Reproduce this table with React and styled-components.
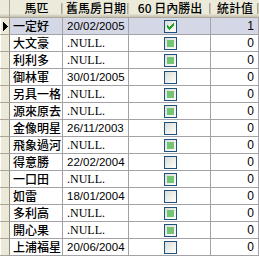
import React from "react";
import styled, { createGlobalStyle, css } from "styled-components";

const GlobalStyle = createGlobalStyle`
  html, body { margin: 0; padding: 0; background: #fcfcf9; }
  body { font-family: "Liberation Sans", "Noto Sans CJK TC", sans-serif; }
`;

const rows = [
  { name: "一定好", date: "20/02/2005", win: "check", count: 1 },
  { name: "大文豪", date: null, win: "fill", count: 0 },
  { name: "利利多", date: null, win: "fill", count: 0 },
  { name: "御林軍", date: "30/01/2005", win: "empty", count: 0 },
  { name: "另具一格", date: null, win: "fill", count: 0 },
  { name: "源來原去", date: null, win: "fill", count: 0 },
  { name: "金像明星", date: "26/11/2003", win: "empty", count: 0 },
  { name: "飛象過河", date: null, win: "fill", count: 0 },
  { name: "得意勝", date: "22/02/2004", win: "empty", count: 0 },
  { name: "一口田", date: null, win: "fill", count: 0 },
  { name: "如雷", date: "18/01/2004", win: "empty", count: 0 },
  { name: "多利高", date: null, win: "fill", count: 0 },
  { name: "開心果", date: null, win: "fill", count: 0 },
  { name: "上浦福星", date: "20/06/2004", win: "empty", count: 0 },
];

const Sheet = styled.div`
  display: grid;
  grid-template-columns: 10px 53px 66px 82px 48px;
  grid-template-rows: 18px;
  grid-auto-rows: 17px;
  width: 259px;
  background: #ffffff;
`;

const headBase = css`
  box-sizing: border-box;
  background: #ebeadb;
  border-bottom: 1px solid #aca899;
  box-shadow: inset 0 -1px 0 #cbc7b8, inset 0 -2px 0 #d6d2c2, inset 0 -3px 0 #e2decd;
  position: relative;
`;

const Corner = styled.div`
  ${headBase};
  border-right: 1px solid #aca899;
`;

const HeadCell = styled.div`
  ${headBase};
  display: flex;
  align-items: center;
  justify-content: center;
  padding-bottom: 1px;
  font-family: "Noto Sans CJK TC", "Liberation Sans", sans-serif;
  font-size: 12px;
  font-weight: 500;
  line-height: 14px;
  color: #000;
  white-space: nowrap;
  overflow: hidden;
  &::after {
    content: "";
    position: absolute;
    right: 0;
    top: 3px;
    height: 11px;
    width: 1px;
    background: #c7c5b2;
    box-shadow: -1px 0 0 #aca899;
  }
`;

const RowHead = styled.div`
  box-sizing: border-box;
  background: #ece9d8;
  border-right: 1px solid #8d8b7f;
  border-bottom: 1px solid #aca899;
  box-shadow: inset 1px 0 0 #ffffff;
  display: flex;
  align-items: center;
`;

const Pointer = styled.svg`
  display: block;
  margin-left: 3px;
`;

const Cell = styled.div`
  box-sizing: border-box;
  border-right: 1px solid #a3a2a6;
  border-bottom: 1px solid #a3a2a6;
  background: ${(p) => (p.$selected ? "#d4d8e6" : "#ffffff")};
  display: flex;
  align-items: center;
  justify-content: ${(p) =>
    p.$align === "right" ? "flex-end" : p.$align === "center" ? "center" : "flex-start"};
  padding: ${(p) => (p.$align === "right" ? "0 4px 0 0" : p.$align === "center" ? "0" : "0 0 0 3px")};
  color: #000;
  white-space: nowrap;
  overflow: hidden;
`;

const NameText = styled.span`
  font-family: "Noto Sans CJK TC", sans-serif;
  font-size: 12px;
  font-weight: 500;
  line-height: 14px;
`;

const DateText = styled.span`
  font-family: "Liberation Sans", sans-serif;
  font-size: 11.5px;
  line-height: 14px;
  padding-left: 1px;
`;

const NullText = styled.span`
  font-family: "Liberation Serif", serif;
  font-size: 12px;
  line-height: 14px;
  padding-left: 1px;
`;

const NumText = styled.span`
  font-family: "Liberation Sans", sans-serif;
  font-size: 12px;
  line-height: 14px;
`;

const Box = styled.div`
  box-sizing: border-box;
  width: 13px;
  height: 13px;
  border: 1px solid #1c5180;
  background: linear-gradient(135deg, #dcdcd7 0%, #f4f4f0 70%, #ffffff 100%);
  display: flex;
  align-items: center;
  justify-content: center;
  margin-left: 1px;
`;

const Fill = styled.div`
  width: 7px;
  height: 7px;
  background: #73c474;
`;

function CheckBox({ state }) {
  return (
    <Box>
      {state === "fill" && <Fill />}
      {state === "check" && (
        <svg width="11" height="11" viewBox="0 0 11 11" shapeRendering="crispEdges">
          <path
            d="M8 2h1v1H8zM7 3h2v1H7zM2 4h1v1H2zM6 4h3v1H6zM2 5h2v1H2zM5 5h3v1H5zM2 6h5v1H2zM3 7h3v1H3zM4 8h1v1H4z"
            fill="#21a121"
          />
        </svg>
      )}
    </Box>
  );
}

export default function App() {
  return (
    <>
      <GlobalStyle />
      <Sheet>
        <Corner />
        <HeadCell>馬匹</HeadCell>
        <HeadCell>舊馬房日期</HeadCell>
        <HeadCell>60 日內勝出</HeadCell>
        <HeadCell>統計值</HeadCell>
        {rows.map((r, i) => {
          const sel = i === 0;
          return (
            <React.Fragment key={r.name}>
              <RowHead>
                {sel && (
                  <Pointer width="5" height="9" viewBox="0 0 5 9" shapeRendering="crispEdges">
                    <path d="M0 0h1v9H0zM1 1h1v7H1zM2 2h1v5H2zM3 3h1v3H3zM4 4h1v1H4z" fill="#000" />
                  </Pointer>
                )}
              </RowHead>
              <Cell $selected={sel}>
                <NameText>{r.name}</NameText>
              </Cell>
              <Cell $selected={sel}>
                {r.date ? <DateText>{r.date}</DateText> : <NullText>.NULL.</NullText>}
              </Cell>
              <Cell $selected={sel} $align="center">
                <CheckBox state={r.win} />
              </Cell>
              <Cell $selected={sel} $align="right">
                <NumText>{r.count}</NumText>
              </Cell>
            </React.Fragment>
          );
        })}
      </Sheet>
    </>
  );
}
